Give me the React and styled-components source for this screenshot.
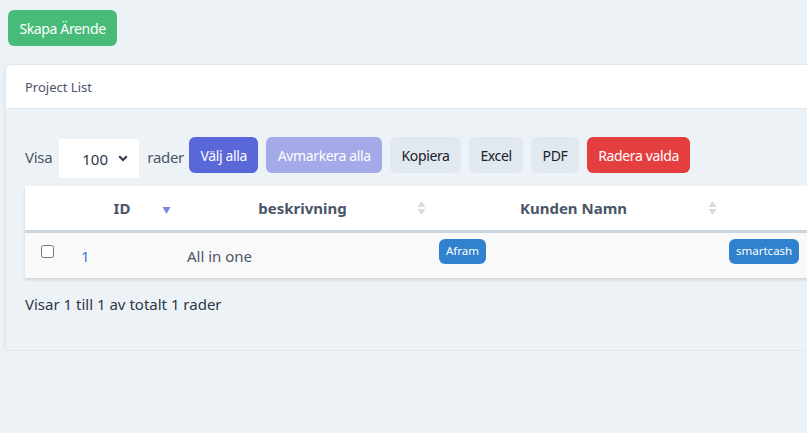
import React from "react";
import styled, { createGlobalStyle } from "styled-components";

const Global = createGlobalStyle`
  html, body { margin: 0; padding: 0; overflow: hidden; }
  body {
    background: #edf2f7;
    font-family: "Noto Sans", "Open Sans", sans-serif;
    color: #2d3748;
  }
`;

const Page = styled.div`
  padding: 10px 0 0 8px;
  width: 1100px;
`;

const Btn = styled.button`
  font-family: inherit;
  font-size: 14px;
  letter-spacing: -0.36px;
  border: none;
  border-radius: 6px;
  height: 36px;
  padding: 0 11.4px;
  cursor: pointer;
  color: ${(p) => p.$fg || "#fff"};
  background: ${(p) => p.$bg};
`;

const Card = styled.div`
  margin: 18px 0 0 -3px;
  width: 1000px;
  background: #edf2f7;
  border: 1px solid #e2e8f0;
  border-radius: 6px;
  box-shadow: 0 2px 4px rgba(0, 0, 0, 0.08);
`;

const CardHeader = styled.div`
  background: #fff;
  height: 43px;
  display: flex;
  align-items: center;
  padding-left: 19px;
  font-size: 13px;
  color: #4a5568;
  border-bottom: 1px solid #e2e8f0;
  border-radius: 6px 6px 0 0;
`;

const CardBody = styled.div`
  padding: 28px 0 36px 19px;
`;

const Toolbar = styled.div`
  display: flex;
  align-items: flex-start;
  gap: 8px;
  font-size: 15px;
  letter-spacing: -0.3px;
  color: #4a5568;
`;

const Label = styled.span`
  line-height: 40px;
  margin-right: ${(p) => p.$mr || 0}px;
`;

const SelectWrap = styled.div`
  position: relative;
  margin-top: 2px;
  margin-left: -1px;
`;

const Select = styled.select`
  appearance: none;
  -webkit-appearance: none;
  border: none;
  background: #fff;
  width: 80px;
  height: 39px;
  padding: 0 0 0 23px;
  font-family: inherit;
  font-size: 15px;
  color: #2d3748;
  border-radius: 2px;
  outline: none;
`;

const Chevron = styled.svg`
  position: absolute;
  right: 11px;
  top: 16px;
  pointer-events: none;
`;

const TableWrap = styled.div`
  margin-top: 8px;
  background: #fff;
  box-shadow: 0 2px 3px rgba(0, 0, 0, 0.12);
`;

const Table = styled.table`
  border-collapse: collapse;
  table-layout: fixed;
  width: 980px;
`;

const Th = styled.th`
  position: relative;
  height: 44px;
  font-size: 15px;
  font-weight: 700;
  color: #4a5568;
  text-align: center;
  border-bottom: 3px solid #cbd5e0;
  padding: 0 ${(p) => (p.$sort ? 8 : 0)}px 0 0;
`;

const Td = styled.td`
  height: 45px;
  background: #f9f9f9;
  font-size: 15px;
  color: ${(p) => (p.$link ? "#3182ce" : "#4a5568")};
  padding: 0 0 0 ${(p) => p.$pl ?? 10}px;
  vertical-align: middle;
`;

const SortIcon = styled.svg`
  position: absolute;
  right: ${(p) => p.$right}px;
  top: 50%;
  transform: translateY(-50%);
`;

const Check = styled.input`
  margin: -9px 0 0 16px;
  width: 13px;
  height: 13px;
  display: block;
`;

const Badge = styled.span`
  display: inline-block;
  background: #3182ce;
  color: #fff;
  font-size: 11.5px;
  border-radius: 6px;
  padding: 4px 7px 5px;
  line-height: 16px;
  position: relative;
  top: -4px;
`;

const Footer = styled.div`
  margin-top: 16px;
  font-size: 15px;
  color: #2d3748;
`;

const SortBoth = ({ right }) => (
  <SortIcon $right={right} width="9" height="16" viewBox="0 0 9 16">
    <path d="M4.5 1 L8.5 7 L0.5 7 Z" fill="#dcdcdc" />
    <path d="M4.5 15 L8.5 9 L0.5 9 Z" fill="#dcdcdc" />
  </SortIcon>
);

const SortDesc = ({ right }) => (
  <SortIcon $right={right} width="9" height="16" viewBox="0 0 9 16" style={{ marginTop: 2 }}>
    <path d="M4.5 12 L8.5 5 L0.5 5 Z" fill="#7f86e0" />
  </SortIcon>
);

export default function App() {
  return (
    <>
      <Global />
      <Page>
        <Btn $bg="#48bb78">Skapa Ärende</Btn>
        <Card>
          <CardHeader>Project List</CardHeader>
          <CardBody>
            <Toolbar>
              <Label>Visa</Label>
              <SelectWrap>
                <Select defaultValue="100">
                  <option>10</option>
                  <option>25</option>
                  <option>50</option>
                  <option>100</option>
                </Select>
                <Chevron width="10" height="7" viewBox="0 0 10 7">
                  <path d="M1.2 1.2 L5 5 L8.8 1.2" stroke="#2d3748" strokeWidth="2" fill="none" />
                </Chevron>
              </SelectWrap>
              <Label $mr={-3}>rader</Label>
              <Btn $bg="#5a67d8">Välj alla</Btn>
              <Btn $bg="#a3a9e9">Avmarkera alla</Btn>
              <Btn $bg="#e2e8f0" $fg="#1a202c">Kopiera</Btn>
              <Btn $bg="#e2e8f0" $fg="#1a202c">Excel</Btn>
              <Btn $bg="#e2e8f0" $fg="#1a202c">PDF</Btn>
              <Btn $bg="#e53e3e">Radera valda</Btn>
            </Toolbar>
            <TableWrap>
              <Table>
                <colgroup>
                  <col style={{ width: 46 }} />
                  <col style={{ width: 110 }} />
                  <col style={{ width: 251 }} />
                  <col style={{ width: 291 }} />
                  <col />
                </colgroup>
                <thead>
                  <tr>
                    <Th></Th>
                    <Th $sort>
                      ID
                      <SortDesc right={10} />
                    </Th>
                    <Th $sort>
                      beskrivning
                      <SortBoth right={6} />
                    </Th>
                    <Th $sort>
                      Kunden Namn
                      <SortBoth right={6} />
                    </Th>
                    <Th></Th>
                  </tr>
                </thead>
                <tbody>
                  <tr>
                    <Td $pl={0}>
                      <Check type="checkbox" />
                    </Td>
                    <Td $link $pl={10}>1</Td>
                    <Td $pl={6}>All in one</Td>
                    <Td $pl={7}>
                      <Badge>Afram</Badge>
                    </Td>
                    <Td $pl={6}>
                      <Badge>smartcash</Badge>
                    </Td>
                  </tr>
                </tbody>
              </Table>
            </TableWrap>
            <Footer>Visar 1 till 1 av totalt 1 rader</Footer>
          </CardBody>
        </Card>
      </Page>
    </>
  );
}
